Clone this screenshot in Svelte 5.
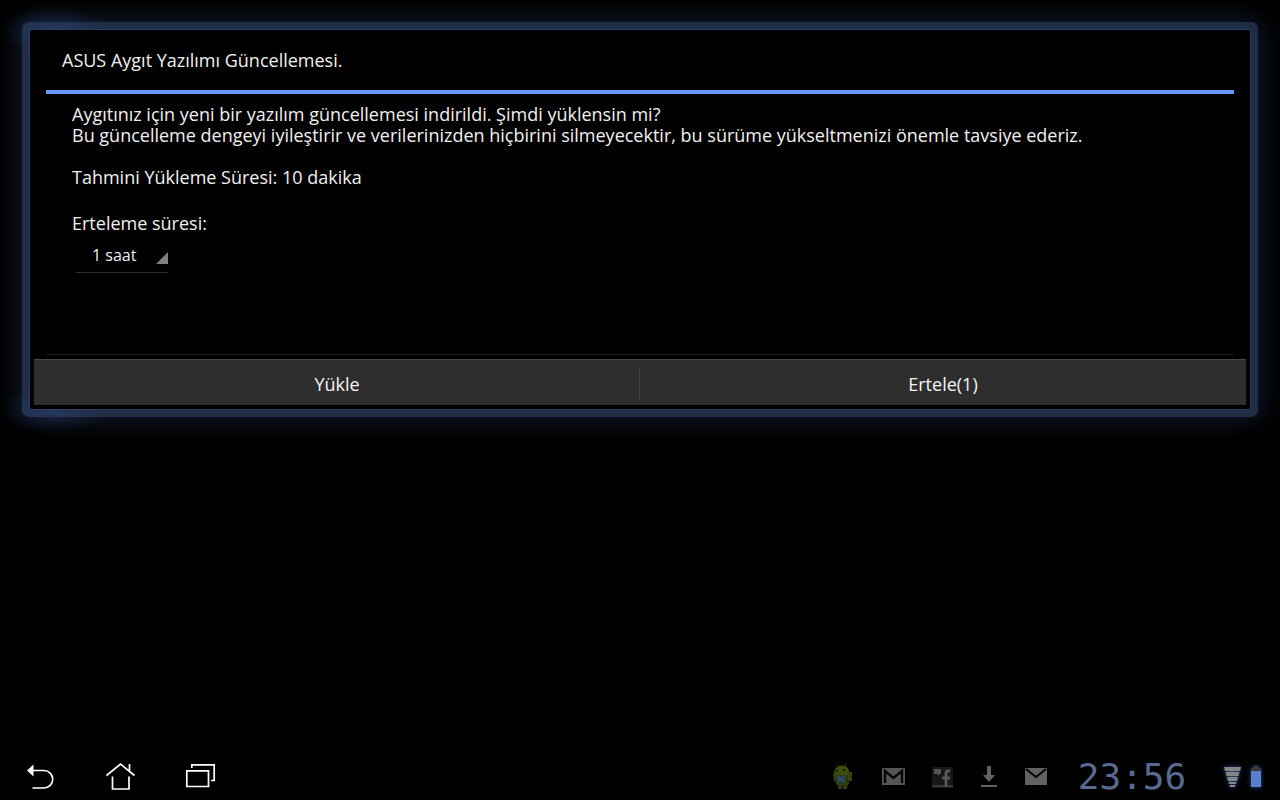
<script lang="ts">
	let delay = $state('1 saat');
	const delays = ['1 saat', '3 saat', '6 saat'];
</script>

<div class="screen">
	<div class="dialog" role="dialog" aria-labelledby="title">
		<h1 id="title">ASUS Aygıt Yazılımı Güncellemesi.</h1>
		<div class="content">
			<p>
				Aygıtınız için yeni bir yazılım güncellemesi indirildi. Şimdi yüklensin mi?<br />
				Bu güncelleme dengeyi iyileştirir ve verilerinizden hiçbirini silmeyecektir, bu sürüme yükseltmenizi önemle tavsiye ederiz.
			</p>
			<p>Tahmini Yükleme Süresi: 10 dakika</p>
			<label for="delay">Erteleme süresi:</label>
			<div class="spinner">
				<select id="delay" bind:value={delay}>
					{#each delays as item}
						<option>{item}</option>
					{/each}
				</select>
				<svg width="12" height="12" viewBox="0 0 12 12"><path d="M12 0V12H0z" fill="#808080" /></svg>
			</div>
		</div>
		<div class="buttons">
			<button type="button">Yükle</button>
			<button type="button">Ertele(1)</button>
		</div>
	</div>

	<footer>
		<nav>
			<button type="button" aria-label="Geri">
				<svg width="32" height="32" viewBox="0 0 32 32">
					<path d="M9 8.500H20a8.750 8.750 0 0 1 0 17.500H8.500" fill="none" stroke="#fff" stroke-width="1.600" />
					<path d="M3 8.500L9.500 2.500V14.500z" fill="#fff" />
				</svg>
			</button>
			<button type="button" aria-label="Ana ekran">
				<svg width="32" height="32" viewBox="0 0 32 32" fill="none" stroke="#fff" stroke-width="1.700">
					<path d="M2.500 13.500L16.500 2L30.500 13.500M25.500 2V9M8.500 14.500V27H25V14.500" />
				</svg>
			</button>
			<button type="button" aria-label="Son uygulamalar">
				<svg width="32" height="32" viewBox="0 0 32 32" fill="none" stroke="#fff" stroke-width="1.700">
					<path d="M2.800 8.800H24.500V24.500H2.800zM7.800 6V2.800H30.200V18.500H27" />
				</svg>
			</button>
		</nav>

		<div class="status">
			<svg width="24" height="28" viewBox="0 0 24 28">
				<path d="M4 1L7 4M14 0L13 3" stroke="#2c3a0c" />
				<path d="M2 11C2 0 17 0 17 9L16 13H3z" fill="#3d4e0f" />
				<path d="M3 12H17V21L15 23V26H11V23H10V26H6V23L4 21z" fill="#2c3a0c" />
				<path d="M16 9H20V18H16zM1 11H4V18H2z" fill="#33420f" />
				<path d="M4 12L9 14L14 12L12 16L14 21L9 18L4 21L6 16z" fill="#2f476b" />
				<path d="M4 7H6V9H4zM11 6H13V8H11z" fill="#181f08" />
			</svg>
			<svg width="24" height="18" viewBox="0 0 24 18">
				<path d="M0 0H23V17H0z" fill="#555" />
				<path d="M3 15V3L11.500 10L20 3V15" fill="none" stroke="#050505" stroke-width="2.400" />
			</svg>
			<svg width="22" height="21" viewBox="0 0 22 21">
				<path d="M0 0H21V21H0z" fill="#171717" />
				<path d="M0 18H21V20H0z" fill="#383838" />
				<path d="M2 2H9V7H7V9L5 7H2z" fill="#555" />
				<path d="M18 4H16Q14 4 14 7V20M10 11H18" fill="none" stroke="#595959" stroke-width="2.800" />
			</svg>
			<svg width="18" height="22" viewBox="0 0 18 22">
				<path d="M7 0H11V9H15L9 16L3 9H7zM1 19H17V21H1z" fill="#626262" />
			</svg>
			<svg width="24" height="18" viewBox="0 0 24 18">
				<path d="M1 0H23V17H1z" fill="#626262" />
				<path d="M2 1L12 9L22 1" fill="none" stroke="#050505" stroke-width="2" />
			</svg>
			<time>23:56</time>
			<div class="radio">
				<svg width="18" height="20" viewBox="0 0 18 20">
					<path d="M0 0H17L16 4H1zM1.500 5H15.500L14.500 9H2.500zM3 10H14L13 14H4zM4.500 15H12.500L12 17H5zM5.500 18H11.500L11 20H6z" fill="#858585" />
				</svg>
				<svg width="12" height="22" viewBox="0 0 12 22">
					<path d="M4 0H8V2H11V5H1V2H4z" fill="#3a3a3a" />
					<path d="M1 5H11V21H1z" fill="#597fce" />
				</svg>
			</div>
		</div>
	</footer>
</div>

<style>
	:global(body) { margin: 0; background: #000; }
	.screen {
		box-sizing: border-box; min-height: 100vh; padding: 30px 30px 0;
		display: flex; flex-direction: column; justify-content: space-between;
		background: #000; color: #f0f0f0;
		font-family: "Open Sans", "Noto Sans", sans-serif; font-size: 18px;
	}
	.dialog {
		position: relative; isolation: isolate;
		background: #000; border-radius: 2px;
		box-shadow: 0 0 0 1px #263a64, 0 0 0 8px #202c45, 0 0 26px 9px #142038;
	}
	.dialog::before {
		content: ""; position: absolute; z-index: -1; inset: -30px;
		background:
			radial-gradient(ellipse 56px 24px at 54px 30px, #30477966, transparent),
			radial-gradient(ellipse 56px 24px at 54px calc(100% - 30px), #30477966, transparent);
	}
	.dialog::after {
		content: ""; position: absolute; z-index: -1; inset: 0;
		background: #000; border-radius: 2px;
	}
	h1 {
		margin: 0 16px; padding: 0 16px; border-bottom: 4px solid #6797ff;
		font-size: 18px; font-weight: 400; line-height: 60px;
	}
	.content {
		margin: 0 16px; padding: 10px 26px 0; min-height: 250px;
		border-bottom: 1px solid #1c1c1c; line-height: 21px;
	}
	p { margin: 0 0 21px; }
	label { display: block; margin-top: 25px; }
	.spinner { position: relative; width: 92px; margin: 3px 4px 0; }
	.spinner svg { position: absolute; right: 0; bottom: 9px; pointer-events: none; }
	select {
		appearance: none; box-sizing: border-box; display: block;
		width: 100%; height: 36px; padding: 0 16px;
		border: 0; border-bottom: 1px solid #2c2c2c; border-radius: 0;
		background: none; color: #f0f0f0; font-family: inherit; font-size: 16px;
	}
	select option { background: #222; }
	.buttons { display: flex; padding: 4px; }
	.buttons button {
		flex: 1; height: 46px; padding: 2px 0 0;
		border: 0; border-top: 1px solid #484848;
		background: #2e2e2e; color: #f4f4f4; font: inherit;
	}
	.buttons button:first-child {
		background: linear-gradient(#404040, #404040) right 8px / 1px 32px no-repeat #2e2e2e;
	}
	footer {
		height: 46px; margin: 0 -14px;
		display: flex; justify-content: space-between; align-items: center;
	}
	nav { display: flex; gap: 48px; padding: 2px 0 0 8px; }
	nav button { height: 32px; padding: 0; border: 0; background: none; }
	nav svg { display: block; }
	.status { display: flex; align-items: center; gap: 26px; }
	time {
		width: 132px; margin-left: -8px; text-align: center;
		font-family: "DejaVu Sans Mono", monospace; font-size: 36px; line-height: 36px;
		color: #596a91;
	}
	.radio {
		display: flex; align-items: center; gap: 8px;
		padding-right: 2px; filter: drop-shadow(0 0 2px #2d4f94);
	}
</style>
